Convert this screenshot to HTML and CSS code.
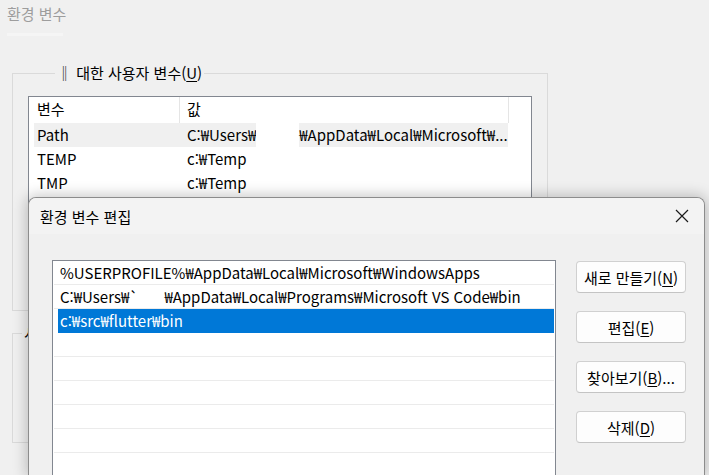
FILE: index.html
```html
<!DOCTYPE html>
<html lang="ko">
<head>
<meta charset="utf-8">
<title>환경 변수 편집</title>
<link rel="stylesheet" href="styles.css">
</head>
<body>
<div class="app">
  <div class="titlebar">환경 변수</div>
  <div class="strip"></div>
  <div class="content">
    <fieldset class="group user">
      <legend>‖ 대한 사용자 변수(<u>U</u>)</legend>
      <div class="listview">
        <div class="lv-head">
          <div class="lv-col c1">변수</div>
          <div class="lv-col c2">값</div>
        </div>
        <div class="lv-row sel">
          <div class="lv-cell c1">Path</div>
          <div class="lv-cell c2">C:₩Users₩<span class="mask"></span>₩AppData₩Local₩Microsoft₩...</div>
        </div>
        <div class="lv-row">
          <div class="lv-cell c1">TEMP</div>
          <div class="lv-cell c2">c:₩Temp</div>
        </div>
        <div class="lv-row">
          <div class="lv-cell c1">TMP</div>
          <div class="lv-cell c2">c:₩Temp</div>
        </div>
      </div>
    </fieldset>
    <fieldset class="group sys">
      <legend>시</legend>
    </fieldset>
  </div>

  <div class="dialog">
    <div class="dlg-title">
      <span>환경 변수 편집</span>
      <svg class="close" width="14" height="14" viewBox="0 0 14 14"><path d="M1 1 L13 13 M13 1 L1 13" stroke="#1a1a1a" stroke-width="1.2" fill="none"/></svg>
    </div>
    <div class="dlg-body">
      <div class="pathlist">
        <div class="pl-row">%USERPROFILE%₩AppData₩Local₩Microsoft₩WindowsApps</div>
        <div class="pl-row">C:₩Users₩`<span class="gap"></span>₩AppData₩Local₩Programs₩Microsoft VS Code₩bin</div>
        <div class="pl-row selected">c:₩src₩flutter₩bin</div>
        <div class="pl-row"></div>
        <div class="pl-row"></div>
        <div class="pl-row"></div>
        <div class="pl-row"></div>
        <div class="pl-row"></div>
        <div class="pl-row"></div>
      </div>
      <div class="buttons">
        <button class="btn">새로 만들기(<u>N</u>)</button>
        <button class="btn">편집(<u>E</u>)</button>
        <button class="btn">찾아보기(<u>B</u>)...</button>
        <button class="btn">삭제(<u>D</u>)</button>
      </div>
    </div>
  </div>
</div>
</body>
</html>
```

FILE: styles.css
```css
* { box-sizing: border-box; }
html, body {
  margin: 0;
  padding: 0;
  width: 709px;
  height: 475px;
  overflow: hidden;
  background: #f0f0f0;
  font-family: "Noto Sans CJK KR", "Noto Sans", sans-serif;
  font-size: 15px;
  color: #000;
}
u { text-decoration: underline; text-underline-offset: 2px; }
.app {
  position: relative;
  width: 709px;
  height: 475px;
  overflow: hidden;
}
.titlebar {
  height: 33px;
  padding: 3px 0 0 7px;
  line-height: 22px;
  color: #9d9d9d;
  background: #f0f0f0;
}
.strip {
  margin-left: 7px;
  width: 56px;
  height: 3px;
  background: #f5f5f5;
}
.content {
  padding: 0 0 0 12px;
}
.group {
  margin: 0;
  width: 536px;
  border: 1px solid #dadada;
  padding: 0 15px 14px 15px;
  min-inline-size: 0;
}
.group.user { margin-top: 27px; }
.group legend {
  padding: 0 2px;
  line-height: 20px;
  height: 20px;
}
.group.user legend { margin-left: 27px; }
.group.sys {
  margin-top: 12px;
  height: 120px;
}
.group.sys legend { margin-left: -6px; }
.listview {
  margin-top: 13px;
  width: 504px;
  height: 200px;
  border: 1px solid #828790;
  background: #fff;
}
.lv-head {
  display: flex;
  height: 26px;
  line-height: 24px;
}
.lv-col {
  border-right: 1px solid #e5e5e5;
}
.lv-col.c1 { width: 151px; padding-left: 8px; }
.lv-col.c2 { width: 329px; padding-left: 7px; }
.lv-row {
  display: flex;
  margin-left: 5px;
  width: 474px;
  height: 24px;
  line-height: 24px;
}
.lv-row.sel { background: #f0f0f0; }
.lv-cell { white-space: nowrap; overflow: hidden; }
.lv-cell.c1 { width: 146px; padding-left: 3px; }
.lv-cell.c2 { width: 328px; padding-left: 7px; }
.mask {
  display: inline-block;
  width: 43px;
  height: 24px;
  vertical-align: top;
  background: #fff;
}

.dialog {
  position: absolute;
  left: 28px;
  top: 197px;
  width: 677px;
  height: 278px;
  background: #f0f0f0;
  border: 1px solid #8c8c8c;
  border-bottom: none;
  border-radius: 8px 8px 0 0;
  box-shadow: 0 0 14px 2px rgba(0, 0, 0, 0.22);
  overflow: hidden;
}
.dlg-title {
  display: flex;
  align-items: center;
  justify-content: space-between;
  height: 36px;
  padding: 0 15px 0 11px;
  background: #f3f3f3;
}
.dlg-body {
  display: flex;
  align-items: flex-start;
  padding: 26px 0 0 23px;
}
.pathlist {
  width: 504px;
  height: 215px;
  border: 1px solid #828790;
  border-bottom: none;
  background: #fff;
  padding: 0 1px 0 1px;
  overflow: hidden;
}
.pl-row {
  height: 24px;
  line-height: 23px;
  border-bottom: 1px solid #ebebeb;
  padding-left: 6px;
  white-space: nowrap;
  overflow: hidden;
}
.pl-row.selected {
  background: linear-gradient(to right, transparent 4px, #0078d7 4px);
  border-bottom-color: transparent;
  color: #fff;
}
.gap {
  display: inline-block;
  width: 26px;
}
.buttons {
  display: flex;
  flex-direction: column;
  gap: 18px;
  margin-left: 20px;
  margin-top: 1px;
}
.btn {
  width: 110px;
  height: 32px;
  padding: 0;
  font: inherit;
  color: #000;
  background: #fdfdfd;
  border: 1px solid #d0d0d0;
  border-bottom-color: #c4c4c4;
  border-radius: 4px;
}
```
